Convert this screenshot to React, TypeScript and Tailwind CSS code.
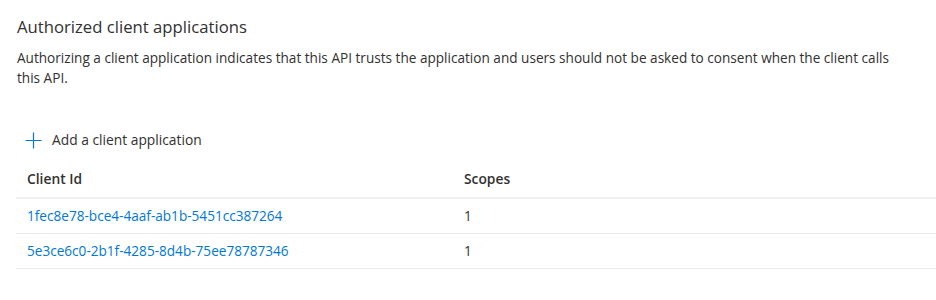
const clients = [
  { id: '1fec8e78-bce4-4aaf-ab1b-5451cc387264', scopes: 1 },
  { id: '5e3ce6c0-2b1f-4285-8d4b-75ee78787346', scopes: 1 },
];

function PlusIcon() {
  return (
    <svg width="17" height="17" viewBox="0 0 17 17" fill="none" className="shrink-0">
      <path d="M8.5 0.5v16M0.5 8.5h16" stroke="#0078d4" strokeWidth="1.2" />
    </svg>
  );
}

export default function App() {
  return (
    <div className="w-[936px] h-[300px] bg-white text-[#323130] font-['Open_Sans',sans-serif] overflow-hidden">
      <div className="pl-[17px] pt-[16px]">
        <h2 className="text-[16.7px] leading-[22px] font-normal">Authorized client applications</h2>
        <p className="mt-[10px] w-[880px] text-[13.6px] leading-[20px]">
          Authorizing a client application indicates that this API trusts the application and users should not be asked to consent when the client calls this API.
        </p>
      </div>

      <button className="mt-[42px] ml-[25px] flex items-center gap-[10px] text-[13.8px] leading-[20px] text-[#323130]">
        <PlusIcon />
        Add a client application
      </button>

      <div className="ml-[16px] mt-[10px]">
        <div className="grid grid-cols-[437px_1fr] h-[39px] items-center border-b-2 border-[#f0f0f0] text-[13.8px] font-semibold">
          <div className="pl-[11px] pt-[1px]">Client Id</div>
          <div className="pl-[11px] pt-[1px]">Scopes</div>
        </div>
        {clients.map((c) => (
          <div
            key={c.id}
            className="grid grid-cols-[437px_1fr] h-[35px] items-center border-b border-[#edebe9] text-[13.6px]"
          >
            <a href="#" className="pl-[11px] text-[#0078d4]">
              {c.id}
            </a>
            <div className="pl-[11px]">{c.scopes}</div>
          </div>
        ))}
      </div>
    </div>
  );
}
